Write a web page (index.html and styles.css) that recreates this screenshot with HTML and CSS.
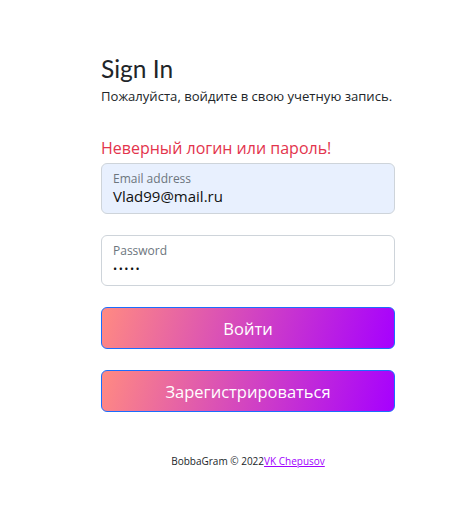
FILE: index.html
```html
<!DOCTYPE html>
<html lang="ru">
<head>
<meta charset="utf-8">
<title>Sign In</title>
<link rel="stylesheet" href="styles.css">
</head>
<body>
<main class="page">
  <form class="signin">
    <h1 class="title">Sign In</h1>
    <p class="subtitle">Пожалуйста, войдите в свою учетную запись.</p>
    <p class="error">Неверный логин или пароль!</p>
    <div class="field field-filled">
      <span class="field-label">Email address</span>
      <span class="field-value">Vlad99@mail.ru</span>
    </div>
    <div class="field">
      <span class="field-label">Password</span>
      <span class="field-value field-dots">•••••</span>
    </div>
    <button type="button" class="btn">Войти</button>
    <button type="button" class="btn">Зарегистрироваться</button>
  </form>
  <footer class="footer">BobbaGram © 2022<a class="footer-link" href="#">VK Chepusov</a></footer>
</main>
</body>
</html>
```
FILE: styles.css
```css
html, body {
  margin: 0;
  padding: 0;
  background: #ffffff;
}
body {
  font-family: "Open Sans", "Noto Sans", sans-serif;
  color: #212529;
}
.page {
  width: 294px;
  padding: 52px 0 0 101px;
}
.signin {
  display: flex;
  flex-direction: column;
}
.title {
  margin: 0;
  font-family: Lato, sans-serif;
  font-weight: 400;
  font-size: 24.5px;
  line-height: 34px;
  color: #212529;
}
.subtitle {
  margin: 0;
  font-size: 13.1px;
  line-height: 20px;
  white-space: nowrap;
}
.error {
  margin: 29px 0 2px;
  font-size: 16px;
  line-height: 26px;
  color: #e3344d;
}
.field {
  box-sizing: border-box;
  height: 51px;
  border: 1px solid #ced4da;
  border-radius: 6px;
  padding: 7px 11px 0;
  display: flex;
  flex-direction: column;
  margin-bottom: 21px;
  background: #fff;
}
.field-filled {
  background: #e8f0fe;
}
.field-label {
  font-size: 12px;
  line-height: 16px;
  color: #6c757d;
}
.field-value {
  font-size: 15px;
  line-height: 19px;
  color: #111;
}
.field-dots {
  font-size: 11px;
  letter-spacing: 1.5px;
}
.btn {
  box-sizing: border-box;
  height: 42px;
  border: 1px solid #1a6dfd;
  border-radius: 6px;
  background: linear-gradient(105deg, #ff8a82 0%, #a600ff 100%);
  color: #fff;
  font-family: "Open Sans", "Noto Sans", sans-serif;
  font-size: 16.5px;
  margin: 0 0 21px;
  padding: 0;
}
.footer {
  margin-top: 21px;
  text-align: center;
  font-size: 10px;
  color: #212529;
}
.footer-link {
  color: #a100ff;
  text-decoration: underline;
}
```
